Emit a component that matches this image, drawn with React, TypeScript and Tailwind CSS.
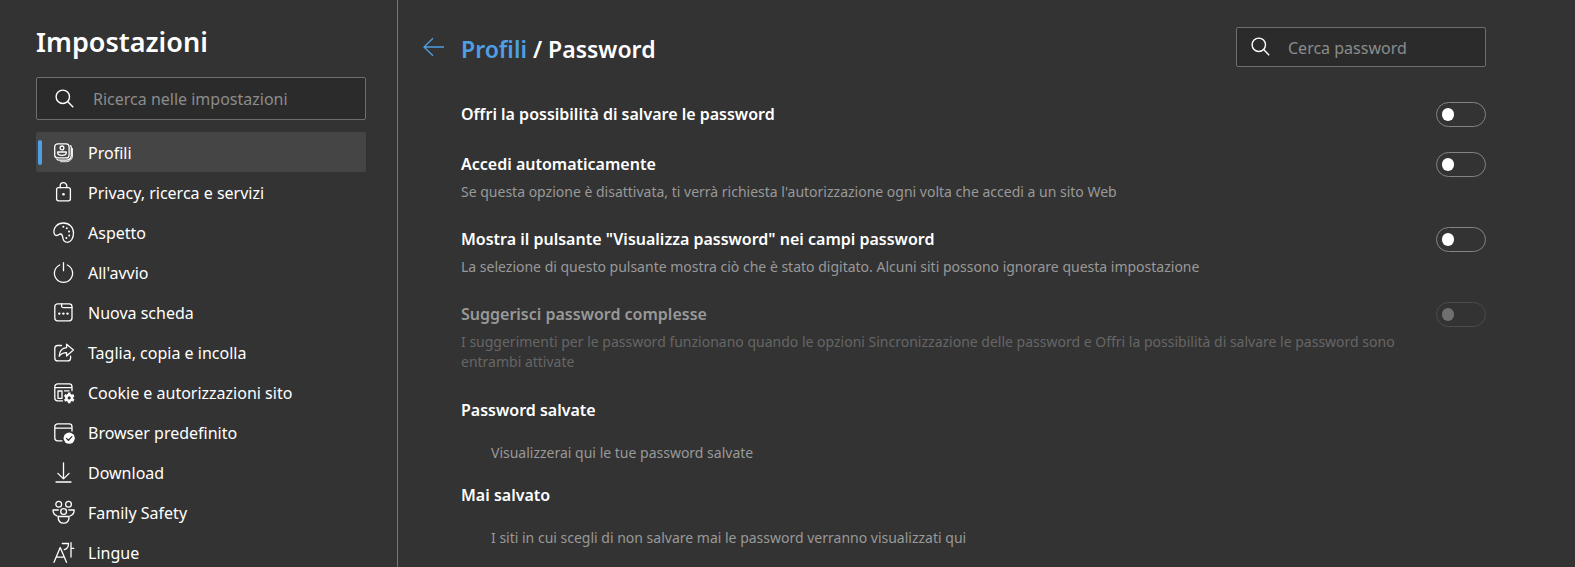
import { useState, type ReactNode } from "react";

const dots = (points: number[][], r = 1) =>
    points.map(([x, y]) => <circle key={`${x}-${y}`} cx={x} cy={y} r={r} fill="currentColor" stroke="none" />);

const Icon = ({ children }: { children: ReactNode }) => (
    <svg className="w-6 h-6 shrink-0" viewBox="0 0 24 24" fill="none" stroke="currentColor" strokeWidth={1.3} strokeLinejoin="round" strokeLinecap="round" aria-hidden="true">
        {children}
    </svg>
);

const SearchIcon = () => (
    <svg className="w-5 h-5" viewBox="0 0 20 20" fill="none" stroke="currentColor" strokeWidth={1.4} aria-hidden="true">
        <circle cx="7.8" cy="7.8" r="6.7" />
        <path d="M12.6 12.6l5.6 5.6" />
    </svg>
);

const items = [
    {
        label: "Profili",
        icon: (
            <>
                <rect x="2.7" y="3.9" width="14.4" height="14" rx="3" />
                <circle cx="10" cy="7.9" r="1.9" />
                <path d="M5.7 12h8.6v.8c0 1.6-1.9 2.6-4.3 2.6s-4.3-1-4.3-2.6z" />
                <path d="M18.6 5.7c.5.6.7 1.3.7 2v7.8a4.6 4.6 0 0 1-4.6 4.6H7c-.8 0-1.5-.2-2-.7" />
                <path d="M20.5 8.5V16a6 6 0 0 1-6 5.7h-6" strokeWidth={0.9} />
            </>
        ),
    },
    {
        label: "Privacy, ricerca e servizi",
        icon: (
            <>
                <rect x="4.6" y="7.6" width="13.8" height="13.2" rx="2" />
                <path d="M8.2 7.6V6a3.3 3.3 0 0 1 6.6 0v1.6" />
                {dots([[11.5, 14.2]], 1.3)}
            </>
        ),
    },
    {
        label: "Aspetto",
        icon: (
            <>
                <path d="M2.1 13.4C.9 7.8 5.5 3 11.5 3c5.8 0 10 4.3 10 10 0 5-2.5 9.3-6 9.3-3.2 0-4.2-1.5-4.6-4.3-.3-2.6-.6-3.9-2.4-4-1.6-.1-2.2 1.5-4 1.5-1.3 0-2.1-.8-2.4-2.1z" />
                {dots([[11.4, 6.7], [14.8, 8.2], [17, 11.6], [17.2, 15.4], [14.4, 18]])}
            </>
        ),
    },
    {
        label: "All'avvio",
        icon: <path d="M11.5 2.7v8M7.7 5A9.1 9.1 0 1 0 15.3 5" />,
    },
    {
        label: "Nuova scheda",
        icon: (
            <>
                <rect x="2.8" y="3.9" width="17.2" height="17" rx="2.8" />
                <path d="M9.6 3.9v2a1.7 1.7 0 0 0 1.7 1.7H20" />
                {dots([[7.3, 13.6], [11.4, 13.6], [15.5, 13.6]], 1.2)}
            </>
        ),
    },
    {
        label: "Taglia, copia e incolla",
        icon: (
            <>
                <path d="M9.5 5.5H5.8a3 3 0 0 0-3 3v9.4a3 3 0 0 0 3 3h9.8a3 3 0 0 0 3-3v-1.7" />
                <path d="M14.6 4.2l6.8 5.9-6.8 5.9v-3.3c-3.3-.1-5.3.9-7.4 3.5.2-5 2.7-8.2 7.4-8.6z" />
            </>
        ),
    },
    {
        label: "Cookie e autorizzazioni sito",
        icon: (
            <>
                <path d="M10.5 20.9H5.6a2.8 2.8 0 0 1-2.8-2.8V6.7a2.8 2.8 0 0 1 2.8-2.8h11.6A2.8 2.8 0 0 1 20 6.7v4M2.8 7.7H20" />
                <rect x="6" y="11" width="4" height="7.3" />
                <path d="M12.5 10.9H17" />
                <circle cx="17.2" cy="17.9" r="2.9" strokeWidth={2.6} />
                <path d="M17.2 14.2v-1.7M17.2 23.3v-1.7M20.4 16l1.4-.8M12.6 20.6l1.4-.8M14 16l-1.4-.8M21.8 20.6l-1.4-.8" strokeWidth={2.6} strokeLinecap="butt" />
            </>
        ),
    },
    {
        label: "Browser predefinito",
        icon: (
            <>
                <path d="M10 20.9H5.6a2.8 2.8 0 0 1-2.8-2.8V6.7a2.8 2.8 0 0 1 2.8-2.8h11.6A2.8 2.8 0 0 1 20 6.7V11M2.8 8.2H20" />
                <circle cx="17.2" cy="18.2" r="5.6" fill="currentColor" stroke="none" />
                <path d="M14.5 18.4l1.9 1.9 3.5-3.7" stroke="#333" />
            </>
        ),
    },
    {
        label: "Download",
        icon: <path d="M11.5 2.8v16M5.9 13.4l5.6 5.5 5.6-5.5M4 22h15" />,
    },
    {
        label: "Family Safety",
        icon: (
            <>
                <circle cx="6.7" cy="4.3" r="2.9" />
                <circle cx="16.5" cy="4.3" r="2.9" />
                <circle cx="11.6" cy="11.5" r="2.9" />
                <path d="M6.1 16.5h11c0 4-2 6.7-5.5 6.7s-5.5-2.7-5.5-6.7z" />
                <path d="M6.3 10H1c0 3 1.3 5 4 5.8M16.9 10h5.3c0 3-1.3 5-4 5.8" />
            </>
        ),
    },
    {
        label: "Lingue",
        icon: (
            <path d="M2 22.3L8.2 7.5l6.3 14.8M4.2 17.2h8M10.3 3.5h6.2c0 3.3-1.5 5.5-4.2 6.2M19 2.7V17M19 8.3h2.8" />
        ),
    },
];

const settings = [
    { id: "save", title: "Offri la possibilità di salvare le password" },
    {
        id: "auto",
        title: "Accedi automaticamente",
        text: "Se questa opzione è disattivata, ti verrà richiesta l'autorizzazione ogni volta che accedi a un sito Web",
    },
    {
        id: "reveal",
        title: "Mostra il pulsante \"Visualizza password\" nei campi password",
        text: "La selezione di questo pulsante mostra ciò che è stato digitato. Alcuni siti possono ignorare questa impostazione",
    },
    {
        id: "suggest",
        title: "Suggerisci password complesse",
        text: "I suggerimenti per le password funzionano quando le opzioni Sincronizzazione delle password e Offri la possibilità di salvare le password sono entrambi attivate",
        disabled: true,
    },
];

const sections = [
    { title: "Password salvate", text: "Visualizzerai qui le tue password salvate" },
    { title: "Mai salvato", text: "I siti in cui scegli di non salvare mai le password verranno visualizzati qui" },
];

export default function App() {
    const [active, setActive] = useState("Profili");
    const [enabled, setEnabled] = useState<Record<string, boolean>>({});

    return (
        <div className="flex h-screen overflow-hidden bg-[#333333] text-white font-['Noto_Sans',sans-serif]">
            {/* Sidebar */}
            <aside className="w-[398px] shrink-0 border-r border-[#767676] pl-9 pr-[31px] pt-6">
                <h1 className="text-[27px] leading-9 font-semibold">Impostazioni</h1>
                <label className="mt-[17px] flex items-center h-[43px] rounded-xs border border-[#6e6e6e] bg-[#2b2b2b] pl-[18px] gap-[18px]">
                    <SearchIcon />
                    <input type="search" aria-label="Ricerca nelle impostazioni" placeholder="Ricerca nelle impostazioni" className="min-w-0 flex-1 bg-transparent outline-none placeholder:text-[#8c8c8c]" />
                </label>
                <nav className="mt-3">
                    {items.map((item) => (
                        <button
                            key={item.label}
                            onClick={() => setActive(item.label)}
                            className={`relative flex items-center w-full h-10 pl-4 gap-3 rounded-xs text-left ${active === item.label ? "bg-[#454545]" : "hover:bg-[#3c3c3c]"}`}
                        >
                            {active === item.label && <span className="absolute left-[2px] top-2 w-1 h-[25px] rounded-full bg-[#4e9fe3]" />}
                            <Icon>{item.icon}</Icon>
                            <span className="pt-0.5">{item.label}</span>
                        </button>
                    ))}
                </nav>
            </aside>

            {/* Content */}
            <main className="flex-1 min-w-0 pl-6 pr-[89px] pt-[27px]">
                <header className="flex items-center h-10">
                    <button aria-label="Indietro" className="text-[#4e9fe3]">
                        <svg className="w-[22px] h-5" viewBox="0 0 22 20" fill="none" stroke="currentColor" strokeWidth={1.3}>
                            <path d="M11 1.2L2 10l9 8.8M2 10h20" />
                        </svg>
                    </button>
                    <h2 className="ml-[17px] pt-1 text-[23px] leading-8 font-semibold">
                        <a href="#profili" className="text-[#4e9fe3]">Profili</a> / Password
                    </h2>
                    <label className="ml-auto flex items-center w-[250px] h-10 rounded-xs border border-[#6e6e6e] bg-[#2b2b2b] pl-[14px] gap-[17px]">
                        <SearchIcon />
                        <input type="search" aria-label="Cerca password" placeholder="Cerca password" className="min-w-0 flex-1 pt-0.5 bg-transparent outline-none placeholder:text-[#8c8c8c]" />
                    </label>
                </header>

                <div className="pl-[39px] pt-[35px]">
                    <div className="flex flex-col gap-[25px]">
                        {settings.map((s) => (
                            <div key={s.id} className="flex items-start justify-between">
                                <div className="max-w-[950px]">
                                    <label htmlFor={s.id} className={`block leading-[25px] font-semibold ${s.disabled ? "text-[#999999]" : ""}`}>{s.title}</label>
                                    {s.text && <p className={`mt-[5px] text-sm leading-5 ${s.disabled ? "text-[#666666]" : "text-[#999999]"}`}>{s.text}</p>}
                                </div>
                                <input
                                    id={s.id}
                                    type="checkbox"
                                    role="switch"
                                    disabled={s.disabled}
                                    checked={!!enabled[s.id]}
                                    onChange={(e) => setEnabled({ ...enabled, [s.id]: e.target.checked })}
                                    className="appearance-none flex items-center shrink-0 w-[50px] h-[25px] px-[5px] rounded-full border border-[#838383] before:w-3 before:h-[13px] before:rounded-full before:bg-white checked:justify-end checked:bg-[#4e9fe3] disabled:border-[#4b4b4b] disabled:before:bg-[#707070]"
                                />
                            </div>
                        ))}
                    </div>

                    <div className="flex flex-col gap-5 mt-[26px]">
                        {sections.map((s) => (
                            <section key={s.title}>
                                <h3 className="leading-[25px] font-semibold">{s.title}</h3>
                                <p className="mt-5 pl-[30px] text-sm leading-5 text-[#999999]">{s.text}</p>
                            </section>
                        ))}
                    </div>
                </div>
            </main>
        </div>
    );
}
